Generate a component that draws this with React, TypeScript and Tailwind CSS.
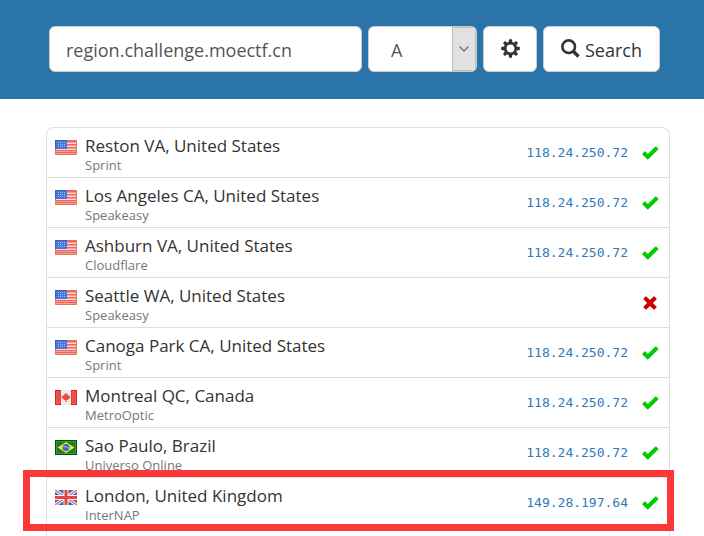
import React from "react";

type Country = "us" | "ca" | "br" | "gb";

interface Server {
  place: string;
  provider: string;
  country: Country;
  address?: string;
  highlighted?: boolean;
}

const servers: Server[] = [
  { place: "Reston VA, United States", provider: "Sprint", country: "us", address: "118.24.250.72" },
  { place: "Los Angeles CA, United States", provider: "Speakeasy", country: "us", address: "118.24.250.72" },
  { place: "Ashburn VA, United States", provider: "Cloudflare", country: "us", address: "118.24.250.72" },
  { place: "Seattle WA, United States", provider: "Speakeasy", country: "us" },
  { place: "Canoga Park CA, United States", provider: "Sprint", country: "us", address: "118.24.250.72" },
  { place: "Montreal QC, Canada", provider: "MetroOptic", country: "ca", address: "118.24.250.72" },
  { place: "Sao Paulo, Brazil", provider: "Universo Online", country: "br", address: "118.24.250.72" },
  { place: "London, United Kingdom", provider: "InterNAP", country: "gb", address: "149.28.197.64", highlighted: true },
];

function FlagArt({ country }: { country: Country }) {
  if (country === "us") {
    return (
      <>
        <rect width="22" height="15" fill="#fbd9d4" />
        {[1, 4, 7, 10, 12].map((y) => (
          <rect key={y} x="1" y={y} width="20" height="1.500" fill="#f4625c" />
        ))}
        <rect x="0" y="0" width="12" height="9" fill="#4474dc" />
        {[2, 4, 6].map((y) =>
          [3, 5, 7, 9].map((x) => <rect key={`${x}-${y}`} x={x} y={y} width="1" height="1" fill="#9dbdf6" />)
        )}
        <path d="M12 .5h9.500v14H.5V9" fill="none" stroke="#d9603f" strokeOpacity="0.8" />
        <path d="M.5 9V.5H12" fill="none" stroke="#3c62bd" />
      </>
    );
  }
  if (country === "ca") {
    return (
      <>
        <rect width="22" height="15" fill="#f1ecea" />
        <rect width="6" height="15" fill="#dc2322" />
        <rect x="16" width="6" height="15" fill="#dc2322" />
        <path d="M1.500 1.500h3.500v12H1.500zM17 1.500h3.500v12H17z" fill="#e5504c" stroke="#ea5a55" />
        <path d="M11 2.500l1.200 2 1-.6v2.100l2.300-.4-.6 1.500.6.5-2.700 2.400h-1.200v2h-1.200v-2H9.200L6.500 7.600l.6-.5-.6-1.500 2.300.4V3.900l1 .6z" fill="#e0504b" />
      </>
    );
  }
  if (country === "br") {
    return (
      <>
        <rect width="22" height="15" fill="#166d1c" />
        <rect x="1.500" y="1.500" width="19" height="12" fill="#1f7a22" stroke="#3a983a" />
        <path d="M11 2l8.500 5.500L11 13 2.500 7.500z" fill="#e9e43c" />
        <circle cx="11" cy="7.500" r="3.500" fill="#3567c5" />
        <path d="M8 6.500q3-.5 6 2" stroke="#a9c6f4" fill="none" />
        <rect x="0.500" y="0.500" width="21" height="14" fill="none" stroke="#0b4d10" />
      </>
    );
  }
  return (
    <>
      <rect width="22" height="15" fill="#4362b4" />
      <path d="M0 0l22 15M22 0L0 15" stroke="#eef0f8" strokeWidth="3.500" />
      <path d="M0 0l22 15M22 0L0 15" stroke="#e0655f" strokeWidth="1.200" />
      <path d="M11 0v15M0 7.500h22" stroke="#f6f4f8" strokeWidth="5" />
      <path d="M11 0v15M0 7.500h22" stroke="#e2473f" strokeWidth="3" />
    </>
  );
}

function Flag({ country }: { country: Country }) {
  return (
    <svg className="mt-3 h-[15px] w-[22px] shrink-0" viewBox="0 0 22 15" aria-hidden="true">
      <FlagArt country={country} />
    </svg>
  );
}

function CheckIcon() {
  return (
    <svg className="h-[14px] w-[17px]" viewBox="0 0 17 14" role="img" aria-label="Resolved">
      <path d="M.4 7.800L2.500 5.500q.4-.4.9 0L5.800 8 13.300.6q.5-.4 1 0l2 2.100q.4.5 0 .9L6.300 13.300q-.6.5-1.100 0L.4 8.500q-.3-.3 0-.7z" fill="#00cc00" />
    </svg>
  );
}

function CrossIcon() {
  return (
    <svg className="h-[14px] w-[15px]" viewBox="0 0 15 14" role="img" aria-label="Failed">
      <path transform="translate(1 0)" d="M3.400.6L7 4.100 10.600.6q.4-.4.9 0l1.900 1.900q.4.5 0 .9L9.900 7l3.500 3.600q.4.4 0 .9l-1.900 1.900q-.5.4-.9 0L7 9.900l-3.600 3.500q-.4.4-.9 0L.6 11.500q-.4-.5 0-.9L4.100 7 .6 3.400q-.4-.4 0-.9L2.500.6q.5-.4.9 0z" fill="#cc0000" />
    </svg>
  );
}

function CogIcon() {
  return (
    <svg className="h-[19px] w-[19px]" viewBox="0 0 19 19" aria-hidden="true">
      <circle cx="9.500" cy="9.500" r="5.300" fill="none" stroke="#333333" strokeWidth="2.800" />
      {[0, 45, 90, 135, 180, 225, 270, 315].map((angle) => (
        <path key={angle} d="M7.600 3.500L8.100.2h2.800l.5 3.300z" fill="#333333" transform={`rotate(${angle} 9.500 9.500)`} />
      ))}
    </svg>
  );
}

function SearchIcon() {
  return (
    <svg className="h-[19px] w-[19px]" viewBox="0 0 19 19" aria-hidden="true">
      <circle cx="7.700" cy="7.700" r="6.300" fill="none" stroke="#333333" strokeWidth="2.600" />
      <path d="M12 12l5.500 5.500" stroke="#333333" strokeWidth="3.400" />
    </svg>
  );
}

const control = "h-[46px] rounded-md border border-[#cccccc] bg-white text-lg";

export default function App() {
  return (
    <div className="flex h-screen flex-col overflow-hidden bg-white font-['Open_Sans','Noto_Sans',sans-serif] text-[#333333]">
      <header className="bg-[#2a74a9] pt-[26px] pr-11 pb-[27px] pl-[49px]">
        <form className="flex gap-[6px]" onSubmit={(e) => e.preventDefault()}>
          <input
            type="text"
            aria-label="Domain"
            defaultValue="region.challenge.moectf.cn"
            className={`${control} min-w-0 flex-1 px-4 pt-[2px] text-[#555555]`}
          />
          <div className={`${control} relative w-[109px] overflow-hidden`}>
            <select aria-label="Record type" defaultValue="A" className="h-full w-full appearance-none pt-[2px] pl-[22px] text-[#555555]">
              <option>A</option>
              <option>AAAA</option>
              <option>CNAME</option>
              <option>MX</option>
            </select>
            <span className="pointer-events-none absolute inset-y-0 right-0 flex w-6 items-center justify-center border border-[#bcbcbc] bg-[#e1e1e1]">
              <svg className="h-[6px] w-[10px]" viewBox="0 0 10 6" aria-hidden="true">
                <path d="M.5.5L5 5 9.500.5" fill="none" stroke="#707070" strokeWidth="1.300" />
              </svg>
            </span>
          </div>
          <button type="button" aria-label="Settings" className={`${control} flex w-[54px] items-center justify-center pb-[2px]`}>
            <CogIcon />
          </button>
          <button type="submit" className={`${control} flex w-[117px] items-center justify-center gap-[5px]`}>
            <span className="pb-[2px]">
              <SearchIcon />
            </span>
            <span className="pt-[2px]">Search</span>
          </button>
        </form>
      </header>

      <main className="flex flex-1 flex-col pt-7 pr-[34px] pl-[46px]">
        <ul className="flex-1 rounded-t-lg border border-b-0 border-[#dddddd]">
          {servers.map((s) => (
            <li key={s.place} className="relative flex h-[50px] border-b border-[#dddddd] pr-[10px] pl-2">
              <Flag country={s.country} />
              <div className="ml-2 flex-1 pt-[6px]">
                <div className="text-[17px] leading-6">{s.place}</div>
                <div className="text-[13px] leading-[14px] text-[#777777]">{s.provider}</div>
              </div>
              {s.address && (
                <a href="#" className="self-center font-['DejaVu_Sans_Mono',monospace] text-[13px] text-[#337ab7]">
                  {s.address}
                </a>
              )}
              <span className="ml-[14px] flex w-[17px] items-center">{s.address ? <CheckIcon /> : <CrossIcon />}</span>
              {s.highlighted && (
                <div className="pointer-events-none absolute -top-2 -right-[5px] -left-6 h-[61px] border-[7px] border-[#fc3737]" />
              )}
            </li>
          ))}
        </ul>
      </main>
    </div>
  );
}
